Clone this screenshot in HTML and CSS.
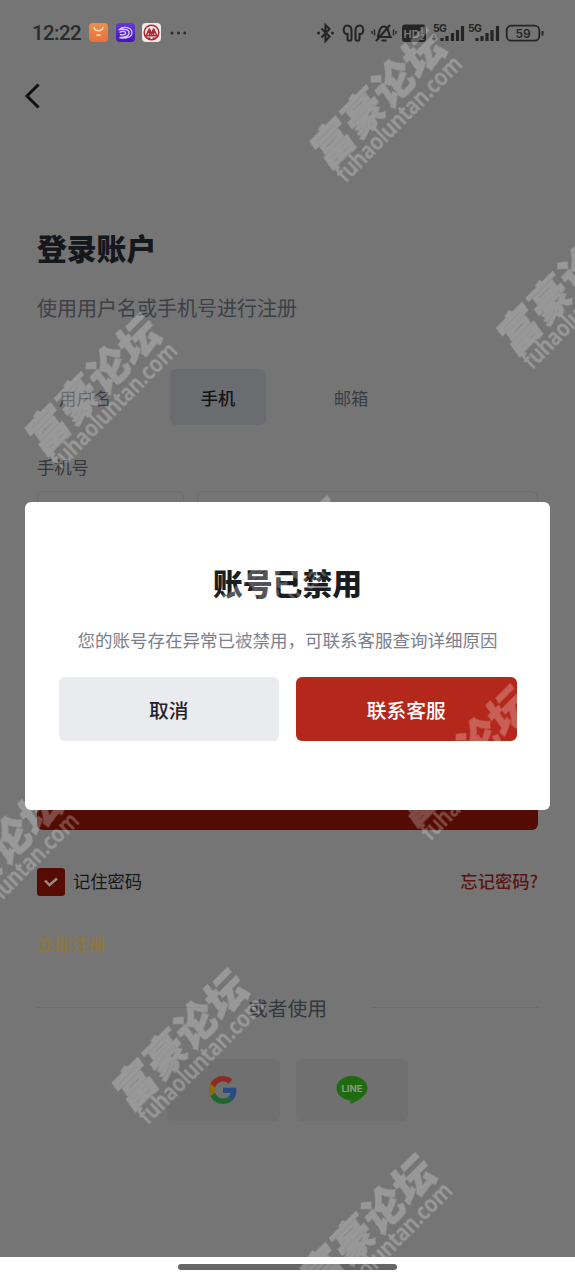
FILE: index.html
```html
<!DOCTYPE html>
<html lang="zh-CN">
<head>
<meta charset="utf-8">
<title>登录账户</title>
<link rel="stylesheet" href="styles.css">
</head>
<body>
<div class="phone">
  <header class="status">
    <span class="clock">12:22</span>
    <div class="apps">
      <svg width="19" height="19" viewBox="0 0 19 19"><defs><linearGradient id="og" x1="0" y1="0" x2="0" y2="1"><stop offset="0" stop-color="#e9914f"/><stop offset="1" stop-color="#e5703c"/></linearGradient></defs><rect width="19" height="19" rx="4" fill="url(#og)"/><path d="M5 4.500a4.600 4 0 0 0 9 0" fill="none" stroke="#f5dcc0" stroke-width="1.500" stroke-linecap="round"/><path d="M7.300 12.200h4.400" stroke="#f3c9a8" stroke-width="1.800"/></svg>
      <svg width="19" height="19" viewBox="0 0 19 19"><defs><linearGradient id="pg" x1="0" y1="0" x2="0" y2="1"><stop offset="0" stop-color="#6539da"/><stop offset="1" stop-color="#4613bd"/></linearGradient></defs><rect width="19" height="19" rx="4" fill="url(#pg)"/><path d="M3.500 6.500c3-3.600 12.500-2.500 12.500 3.200 0 4-5.500 6.300-12.500 4.800 5 .1 9.600-1.500 9.600-4.600 0-3.400-5.300-4.100-9.600-3.400zM3.500 9.300c3-1.400 6.200-1 6.200.7 0 1.600-3 2.200-5.700 1.500" fill="none" stroke="#d9cdf5" stroke-width="1.300"/></svg>
      <svg width="19" height="19" viewBox="0 0 19 19"><rect width="19" height="19" rx="4" fill="#eee8e8"/><circle cx="9.500" cy="9.500" r="7.300" fill="none" stroke="#a92b33" stroke-width="1.500"/><path d="M3 12.800h13M4.500 12l3-6.500v6.500M14.500 12l-3-6.500v6.500M7.500 6l2 5 2-5M5 15.300h3.500M10.500 15.300H14" fill="none" stroke="#a92b33" stroke-width="1.600"/></svg>
    </div>
    <svg class="dots" width="18" height="4" viewBox="0 0 18 4" fill="#2c2c2c"><circle cx="2" cy="2" r="1.500"/><circle cx="8.500" cy="2" r="1.500"/><circle cx="14.700" cy="2" r="1.500"/></svg>
    <svg class="system" width="232" height="24" viewBox="0 0 232 24" fill="none" stroke="#252525" stroke-width="2">
      <path d="M5.500 7.500l8 8-4 4.500V4l4 4-8 8.500" stroke-width="2.100"/><circle cx="2.500" cy="12" r="1.500" fill="#252525" stroke="none"/><circle cx="16.500" cy="12" r="1.500" fill="#252525" stroke="none"/>
      <path d="M35.500 17.500c0 3-4 3-4 0v-4.500c-5 1-5-8.500-.5-8.500 3 0 4.500 2 4.500 5zM39.500 17.500c0 3 4 3 4 0v-4.500c5 1 5-8.500.5-8.500-3 0-4.500 2-4.500 5z"/>
      <path d="M61.500 16c2-3 1-10 6-10.500 5.500-.5 4.500 7 7 10.500H61M65.500 19.500h5M60 20L74 4" stroke-width="2.100"/><path d="M58.500 8.500v6M56 10v3M77.500 8.500v6M80 10v3" stroke-width="1.400"/>
      <rect x="86" y="3.500" width="24" height="17.500" rx="3" fill="#252525" stroke="none"/>
      <text class="hd" x="87.500" y="16.500">HD</text><text class="tiny" x="104" y="12">1</text><text class="tiny" x="104" y="19">2</text>
      <text class="net" x="117" y="11" textLength="14">5G</text>
      <path d="M118 14v5M116 17l2 2 2-2" stroke-width="1.200"/>
      <path d="M126 20v-3M131 20v-5M136.500 20v-8M141.500 20v-11M146.500 20v-15" stroke-width="3.200"/>
      <text class="net" x="152" y="11" textLength="14">5G</text>
      <path d="M161 20v-3M166 20v-5M171 20v-8M176 20v-11M181.500 20v-15" stroke-width="3.200"/>
      <rect x="190.700" y="4.700" width="32.600" height="15" rx="4.500" stroke-width="1.800"/><path d="M226.500 10v4.500" stroke-width="2"/>
      <text class="bat" x="207" y="16.500" text-anchor="middle">59</text>
    </svg>
  </header>
  <nav class="nav"><svg width="18" height="28" viewBox="0 0 18 28"><path d="M15.500 2.500L4 14l11.500 11.500" fill="none" stroke="#101010" stroke-width="3"/></svg></nav>

  <main class="page">
    <h1>登录账户</h1>
    <p class="sub">使用用户名或手机号进行注册</p>
    <div class="tabs"><span>用户名</span><span class="on">手机</span><span>邮箱</span></div>
    <label class="label">手机号</label>
    <div class="fields"><i class="code"></i><i class="number"></i></div>
    <button class="login" aria-label="登录"></button>
    <div class="row">
      <span class="box"><svg width="16" height="12" viewBox="0 0 16 12"><path d="M2 4.500L6.500 9 14 2.500" fill="none" stroke="#968c8b" stroke-width="2.400"/></svg></span>
      <span class="remember">记住密码</span>
      <a class="forgot">忘记密码?</a>
    </div>
    <a class="register">立即注册</a>
    <div class="or"><i></i><span>或者使用</span><i></i></div>
    <div class="social">
      <span><svg width="28" height="28" viewBox="0 0 48 48"><path fill="#8e2a22" d="M24 9.500c3.500 0 6.700 1.200 9.200 3.600l6.900-6.900C35.900 2.400 30.500 0 24 0 14.600 0 6.500 5.400 2.600 13.200l8 6.200C12.400 13.700 17.700 9.500 24 9.500z"/><path fill="#284b84" d="M47 24.600c0-1.600-.2-3.100-.4-4.600H24v9h12.900c-.6 3-2.200 5.500-4.700 7.200l7.700 6C44.400 38 47 32 47 24.600z"/><path fill="#8a6a0a" d="M10.500 28.600a14.500 14.500 0 0 1 0-9.200l-8-6.200a24 24 0 0 0 0 21.600z"/><path fill="#1e682f" d="M24 48c6.500 0 11.900-2.100 15.900-5.800l-7.700-6c-2.200 1.500-4.900 2.300-8.200 2.300-6.300 0-11.600-4.200-13.500-9.900l-8 6.200C6.500 42.600 14.600 48 24 48z"/></svg></span>
      <span><svg width="32" height="30" viewBox="0 0 32 30"><path d="M16 1C7.400 1 .5 6.400.5 13.300c0 6 5.500 11 12.700 11.900 2.200.4 1.300 2.400 1.200 3.600 1.800.2 17.100-7 17.100-15.500C31.500 6.400 24.600 1 16 1z" fill="#1f6b0f"/><text class="line" x="16" y="16.500" text-anchor="middle" textLength="21" lengthAdjust="spacingAndGlyphs">LINE</text></svg></span>
    </div>
  </main>
  <footer class="home"><i></i></footer>

  <section class="modal">
    <h2>账号已禁用</h2>
    <p>您的账号存在异常已被禁用，可联系客服查询详细原因</p>
    <div class="actions"><button class="cancel">取消</button><button class="contact">联系客服</button></div>
  </section>

  <svg class="marks" width="575" height="1280" viewBox="0 0 575 1280">
    <defs><g id="mark" transform="rotate(-45)"><text class="mark-cn" x="-1" y="-3" textLength="170" transform="skewX(-9)">富豪论坛</text><text class="mark-url" x="3" y="18.500" textLength="167" lengthAdjust="spacingAndGlyphs">fuhaoluntan.com</text></g></defs>
    <g class="ink">
      <use href="#mark" x="330" y="172.400"/>
      <use href="#mark" x="516.600" y="359"/>
      <use href="#mark" x="45" y="459"/>
      <use href="#mark" x="231.700" y="642.400"/>
      <use href="#mark" x="415" y="830.400"/>
      <use href="#mark" x="-53.300" y="929"/>
      <use href="#mark" x="132.300" y="1114"/>
      <use href="#mark" x="320" y="1299"/>
    </g>
  </svg>
</div>
</body>
</html>
```
FILE: styles.css
```css
* { box-sizing: border-box; }
body { margin: 0; font-family: "Noto Sans CJK SC", sans-serif; background: #757575; }
h1, h2, p { margin: 0; }
button { border: 0; padding: 0; font-family: inherit; }
svg { display: block; flex: none; }
.phone { position: relative; width: 575px; height: 1280px; overflow: hidden; background: #757575; display: flex; flex-direction: column; }

.status { display: flex; align-items: center; height: 65px; padding-left: 32px; flex: none; }
.clock { width: 57px; font: 500 20.500px/24px Roboto, sans-serif; letter-spacing: -.6px; color: #2b2b2b; white-space: nowrap; }
.apps { display: flex; gap: 7.500px; }
.dots { margin-left: 9px; }
.system { margin-left: 128px; }
.hd { font: 700 11px Inter, sans-serif; fill: #757575; stroke: none; }
.tiny { font: 700 7px Inter, sans-serif; fill: #757575; stroke: none; }
.net { font: 700 10.500px Inter, sans-serif; fill: #252525; stroke: none; }
.bat { font: 600 12px Inter, sans-serif; fill: #252525; stroke: none; }
.nav { height: 63px; padding: 17px 0 0 23px; flex: none; }

.page { flex: 1; padding: 97px 37px 0; display: flex; flex-direction: column; }
h1 { font-size: 29.800px; line-height: 44px; font-weight: 900; color: #14171b; }
.sub { margin-top: 24px; font-size: 20px; line-height: 30px; color: #3d4047; }
.tabs { display: flex; gap: 37px; margin-top: 46px; height: 56px; }
.tabs span { width: 96px; display: flex; align-items: center; justify-content: center; font-size: 17.300px; color: #3a3d44; }
.tabs .on { background: #6a6c6f; color: #121417; border-radius: 6px; font-weight: 500; }
.label { margin-top: 29px; font-size: 17.300px; line-height: 26px; color: #34373d; }
.fields { display: flex; gap: 13px; margin-top: 11px; height: 64px; }
.fields i { border: 1px solid #6d6d6d; border-radius: 6px; }
.code { width: 147px; }
.number { flex: 1; }
.login { margin-top: 211px; height: 64px; border-radius: 6px; background: #540b03; }
.row { display: flex; align-items: center; height: 28px; margin-top: 38px; font-size: 17.300px; line-height: 26px; color: #151719; }
.remember, .forgot { margin-bottom: 2px; }
.box { width: 28px; height: 28px; margin-right: 8px; border-radius: 3px; background: #560c05; display: flex; align-items: center; justify-content: center; }
.forgot { margin-left: auto; color: #5a1410; font-weight: 500; }
.register { margin-top: 35px; font-size: 17.300px; line-height: 26px; color: #8d773c; font-weight: 500; }
.or { display: flex; align-items: center; justify-content: space-between; height: 30px; margin-top: 35px; font-size: 19.800px; color: #34373d; }
.or i { width: 167px; height: 1px; background: #6b6b6b; }
.social { display: flex; justify-content: center; gap: 16px; margin-top: 37px; }
.social span { width: 112.500px; height: 62px; border-radius: 6px; background: #707070; display: flex; align-items: center; justify-content: center; }
.line { font: 700 9px Inter, sans-serif; fill: #8b9a88; }

.home { height: 23px; flex: none; background: #fff; display: flex; justify-content: center; padding-top: 7px; }
.home i { width: 219px; height: 6px; border-radius: 3px; background: #666; }

.modal { position: absolute; left: 25px; top: 502px; width: 525px; height: 308px; border-radius: 6px; background: #fff; padding: 58px 33.500px 0; text-align: center; }
h2 { font-size: 29.800px; line-height: 44px; font-weight: 900; color: #191c20; }
.modal p { margin-top: 23px; font-size: 17.500px; line-height: 26px; color: #7a7e8d; white-space: nowrap; display: flex; justify-content: center; }
.actions { display: flex; gap: 17px; margin-top: 24px; }
.actions button { flex: 1; height: 64px; border-radius: 6px; font-size: 19.800px; font-weight: 500; }
.cancel { background: #eaebef; color: #202329; }
.contact { background: #b4281b; color: #fff; }

.marks { position: absolute; left: 0; top: 0; pointer-events: none; }
.ink { opacity: .26; fill: #fff; }
.mark-cn { font: 900 42px "Noto Sans CJK SC", sans-serif; stroke: #fff; stroke-width: .8px; }
.mark-url { font: 600 22.500px "Noto Sans", sans-serif; stroke: #fff; stroke-width: .3px; }
```
